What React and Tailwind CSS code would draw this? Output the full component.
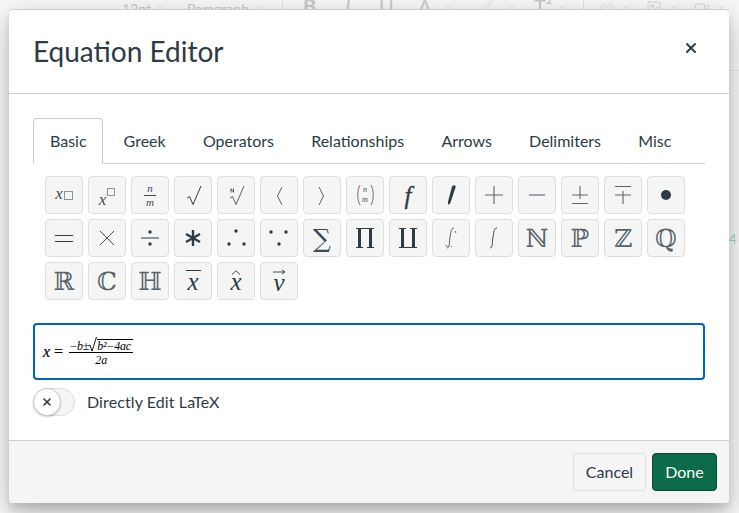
import React from "react";
import { X, ChevronDown, Pencil, Link2, Image, Video } from "lucide-react";

const tabs = ["Basic", "Greek", "Operators", "Relationships", "Arrows", "Delimiters", "Misc"];

const Box = ({ className = "" }) => <span className={`inline-block border border-[#8a959c] ${className}`} />;
const Line = ({ d, w = 24, h = 24, sw = 1, c = "#2d3b45" }) => (
  <svg width={w} height={h} viewBox={`0 0 ${w} ${h}`} fill="none" stroke={c} strokeWidth={sw}><path d={d} /></svg>
);
const Fill = ({ d }) => (
  <svg width="24" height="24" viewBox="0 0 24 24" fill="#2d3b45"><path d={d} /></svg>
);
const T = ({ c, cls = "" }) => <span className={`leading-none ${cls}`}>{c}</span>;
const dots = (pts) => (
  <svg width="24" height="24" viewBox="0 0 24 24" fill="#2d3b45">{pts.map(([x, y]) => <circle key={x + "-" + y} cx={x} cy={y} r="1.7" />)}</svg>
);
const Dbl = ({ c }) => <T c={c} cls="font-['DejaVu_Serif'] text-[25px] text-[#56636b]" />;

const row1 = [
  <span className="flex items-end -mt-[3px] font-['Liberation_Serif'] italic text-[17px] leading-none text-[#3d4a53]"><span>x</span><Box className="w-[9px] h-[9px] ml-px mb-[2px]" /></span>,
  <span className="flex items-start mt-[5px] font-['Liberation_Serif'] italic text-[17px] leading-none text-[#3d4a53]"><span className="mt-[3px]">x</span><Box className="w-[8px] h-[8px] ml-px" /></span>,
  <span className="flex flex-col items-center font-['Liberation_Serif'] italic text-[11px] leading-[11px] text-[#3d4a53]"><span>n</span><span className="w-[12px] border-t border-[#3d4a53] my-[1px]" /><span>m</span></span>,
  <Line d="M6 15 L8.5 13.5 L12 21.5 L20 3" />,
  <Line d="M6 15 L8.5 13.5 L12 21.5 L20 3 M7 5.5 L7 9.5 M9.5 5.5 L9.5 9.5 M7 6 L9.5 9" sw={0.8} />,
  <Line d="M15 4 L10.5 13 L15 22" sw={0.8} />,
  <Line d="M9 4 L13.5 13 L9 22" sw={0.8} />,
  <span className="flex items-center font-['Liberation_Serif'] text-[#3d4a53] leading-none">
    <Line w={5} h={22} d="M4 1 C1 6 1 16 4 21" sw={0.7} />
    <span className="flex flex-col italic text-[8px] leading-[10px] items-center w-[9px]"><span>n</span><span>m</span></span>
    <Line w={5} h={22} d="M1 1 C4 6 4 16 1 21" sw={0.7} />
  </span>,
  <T c="f" cls="font-['Liberation_Serif'] italic text-[25px] [-webkit-text-stroke:0.3px_#2d3b45]" />,
  <Fill d="M13 3.5 Q15 1.5 16.5 3 Q17 4 16 6 L11.5 19.5 Q10 22.5 9 21 Q8.6 20 9.2 18 Z" />,
  <Line d="M12 3 V21 M3 12 H21" sw={1.1} c="#59656d" />,
  <Line d="M4 12 H20" sw={1.1} c="#59656d" />,
  <Line d="M12 3 V16 M4 12 H20 M4 20.5 H20" sw={1.1} c="#59656d" />,
  <Line d="M12 8 V21 M4 3.5 H20 M4 12 H20" sw={1.1} c="#59656d" />,
  <span className="block w-[10px] h-[10px] rounded-full bg-[#2d3b45]" />,
];
const row2 = [
  <Line d="M3 9.5 H21 M3 15.5 H21" />,
  <Line d="M5 5 L19 19 M19 5 L5 19" sw={0.9} />,
  <svg width="24" height="24" viewBox="0 0 24 24" fill="#2d3b45"><circle cx="12" cy="6" r="1.7" /><circle cx="12" cy="18" r="1.7" /><path d="M3 11.5 H21 V12.5 H3 Z" /></svg>,
  <Line d="M12 4 V20 M5 8 L19 16 M19 8 L5 16" sw={2.4} />,
  dots([[12, 5], [5, 18], [20, 18]]),
  dots([[4, 6], [19, 6], [12, 18]]),
  <T c="∑" cls="font-['DejaVu_Serif'] text-[25px] text-[#3d4a53]" />,
  <Fill d="M3 2 H21 V3 H19 V21 H21 V22 H14 V21 H16 V3 H8 V21 H10 V22 H3 V21 H5 V3 H3 Z" />,
  <Fill d="M3 22 H21 V21 H19 V3 H21 V2 H14 V3 H16 V21 H8 V3 H10 V2 H3 V3 H5 V21 H3 Z" />,
  <Line d="M8 22 C11 22 10 16 11 11 C12 6 12 2 15 2 M16 5 L17 7 M7 19 L8 21 M12 20 L13 21" sw={0.8} />,
  <Line d="M8 22 C11 22 10 16 11 11 C12 6 12 2 15 2" sw={0.9} />,
  <Dbl c="ℕ" />,
  <Dbl c="ℙ" />,
  <Dbl c="ℤ" />,
  <Dbl c="ℚ" />,
];
const row3 = [
  <Dbl c="ℝ" />,
  <Dbl c="ℂ" />,
  <Dbl c="ℍ" />,
  <span className="flex flex-col items-center font-['Liberation_Serif'] italic text-[25px] leading-[20px]"><span className="w-[15px] border-t border-[#2d3b45] mb-[1px]" />x</span>,
  <span className="flex flex-col items-center font-['Liberation_Serif'] italic text-[25px] leading-[20px]">
    <svg width="10" height="5" viewBox="0 0 10 5" fill="none" stroke="#2d3b45" strokeWidth="0.9"><path d="M1 4.5 L5 0.8 L9 4.5" /></svg>
    <span className="-mt-[3px]">x</span>
  </span>,
  <span className="flex flex-col items-center font-['Liberation_Serif'] italic text-[25px] leading-[20px]">
    <svg width="14" height="6" viewBox="0 0 14 6" fill="none" stroke="#2d3b45" strokeWidth="0.9"><path d="M1 3 H13 M10 1 L13 3 L10 5" /></svg>
    <span className="-mt-[2px]">v</span>
  </span>,
];

const Sym = ({ children }) => (
  <button className="w-[38px] h-[38px] flex items-center justify-center rounded-[4px] border border-[#dcdfe1] bg-[#f5f5f5] text-[#2d3b45]">
    {children}
  </button>
);
const Chev = ({ ml }) => (
  <span className={`shrink-0 self-start mt-[1px] text-[#c4c8cb] ${ml}`}><ChevronDown size={12} strokeWidth={1} /></span>
);
const Rule = ({ ml }) => <span className={`shrink-0 w-px h-[16px] bg-[#dfe1e3] ${ml}`} />;
const Tool = ({ ml, w, children, cls = "" }) => (
  <span className={`shrink-0 leading-none whitespace-nowrap ${ml} ${w} ${cls}`}>{children}</span>
);

export default function App() {
  return (
    <div className="relative w-[739px] h-[513px] overflow-hidden bg-[#f7f7f7] font-['Lato','Noto_Sans',sans-serif] text-[#2d3b45]">
      <div className="flex items-end h-[16px] pl-[122px] text-[14px] text-[#c4c8cb]">
        <Tool ml="" w="w-[31px]">12pt</Tool>
        <Chev ml="ml-[2px]" />
        <Tool ml="ml-[20px]" w="w-[60px]">Paragraph</Tool>
        <Chev ml="ml-[6px]" />
        <Rule ml="ml-[17px]" />
        <Tool ml="ml-[20px]" w="w-[12px]" cls="font-bold text-[20px]">B</Tool>
        <Tool ml="ml-[30px]" w="w-[6px]" cls="italic text-[20px]">I</Tool>
        <Tool ml="ml-[28px]" w="w-[12px]" cls="text-[20px]">U</Tool>
        <Tool ml="ml-[27px]" w="w-[13px]" cls="text-[20px]">A</Tool>
        <Chev ml="ml-[12px]" />
        <Tool ml="ml-[26px]" w="w-[12px]" cls="self-start"><Pencil size={12} strokeWidth={1} /></Tool>
        <Chev ml="ml-[12px]" />
        <Tool ml="ml-[17px]" w="w-[22px]" cls="text-[20px]">T²</Tool>
        <Chev ml="ml-0" />
        <Rule ml="ml-[15px]" />
        <Tool ml="ml-[16px]" w="w-[14px]" cls="self-start"><Link2 size={14} strokeWidth={1} /></Tool>
        <Chev ml="ml-[6px]" />
        <Tool ml="ml-[14px]" w="w-[16px]" cls="self-start"><Image size={16} strokeWidth={1} /></Tool>
        <Chev ml="ml-[6px]" />
        <Tool ml="ml-[14px]" w="w-[16px]" cls="self-start"><Video size={16} strokeWidth={1} /></Tool>
        <Chev ml="ml-[6px]" />
      </div>
      <span className="absolute left-[729px] top-[70px] w-[10px] border-t border-[#e6e6e6]" />
      <span className="absolute left-[729px] top-[233px] text-[13px] leading-none text-[#a9d0bd]">4</span>

      <div className="absolute left-[9px] top-[9px] w-[720px] h-[494px] flex flex-col bg-white rounded-[4px] shadow-[0_6px_7px_rgba(0,0,0,0.1),0_10px_28px_rgba(0,0,0,0.25)] border-t border-[#c7cdd1]">
        <header className="h-[84px] shrink-0 flex items-center justify-between pl-[24px] pr-[30px] border-b border-[#c7cdd1]">
          <h1 className="text-[28px] leading-none font-normal text-[#2d3b45] -mt-[2px]">Equation Editor</h1>
          <X size={16} strokeWidth={3} className="text-[#2d3b45] -mt-[7px]" />
        </header>

        <main className="flex-1 px-[24px] pt-[24px]">
          <nav className="flex h-[46px] border-b border-[#c7cdd1]">
            {tabs.map((t, i) => (
              <div
                key={t}
                className={
                  i === 0
                    ? "h-[46px] w-[70px] mr-[2px] pl-[16px] flex items-center text-[16px] rounded-t-[4px] border border-[#c7cdd1] border-b-white bg-white"
                    : "h-[45px] px-[18.6px] flex items-center text-[16px]"
                }
              >
                {t}
              </div>
            ))}
          </nav>

          <div className="flex flex-col gap-[5px] pl-[12px] pt-[12px]">
            {[row1, row2, row3].map((row, r) => (
              <div key={r} className="flex gap-[5px]">
                {row.map((c, i) => <Sym key={i}>{c}</Sym>)}
              </div>
            ))}
          </div>

          <div className="mt-[23px] h-[57px] rounded-[4px] border-2 border-[#0062c4] flex items-center pl-[8px] text-black font-['Liberation_Serif']">
            <span className="italic text-[16px] [-webkit-text-stroke:0.2px_#000]">x</span>
            <span className="text-[16px] ml-[4px] [-webkit-text-stroke:0.2px_#000]">=</span>
            <span className="ml-[6px] flex flex-col items-center italic text-[12px] leading-[12px]">
              <span className="flex items-end h-[15px] tracking-[-0.2px]">
                <span className="w-[18px] whitespace-nowrap">−b±</span>
                <svg width="9" height="16" viewBox="0 0 9 16" fill="none" stroke="#000" strokeWidth="0.9" className="ml-[1px]"><path d="M0.5 10 L2 9 L4 15 L8.5 1" /></svg>
                <span className="w-[36px] whitespace-nowrap border-t border-black leading-[12px]">b²−4ac</span>
              </span>
              <span className="w-[64px] border-t border-black" />
              <span className="mt-[1px]">2a</span>
            </span>
          </div>

          <div className="mt-[8px] flex items-center">
            <span className="w-[42px] h-[28px] rounded-full bg-[#f5f5f5] border border-[#dcdfe1] flex items-center">
              <span className="w-[28px] h-[28px] -ml-px rounded-full bg-white border border-[#c7cdd1] shadow-[0_1px_2px_rgba(0,0,0,0.2)] flex items-center justify-center">
                <X size={12} strokeWidth={3.2} className="text-[#2d3b45]" />
              </span>
            </span>
            <span className="ml-[12px] text-[16px] tracking-[0.1px]">Directly Edit LaTeX</span>
          </div>
        </main>

        <footer className="h-[63px] shrink-0 bg-[#f5f5f5] border-t border-[#c7cdd1] rounded-b-[4px] flex items-center justify-end gap-[6px] pr-[12px]">
          <button className="h-[38px] w-[73px] rounded-[4px] bg-[#f5f5f5] border border-[#dcdfe1] text-[16px] text-[#2d3b45]">Cancel</button>
          <button className="h-[38px] w-[65px] rounded-[4px] bg-[#0b6a47] border border-[#074a31] text-[16px] text-white">Done</button>
        </footer>
      </div>
    </div>
  );
}
